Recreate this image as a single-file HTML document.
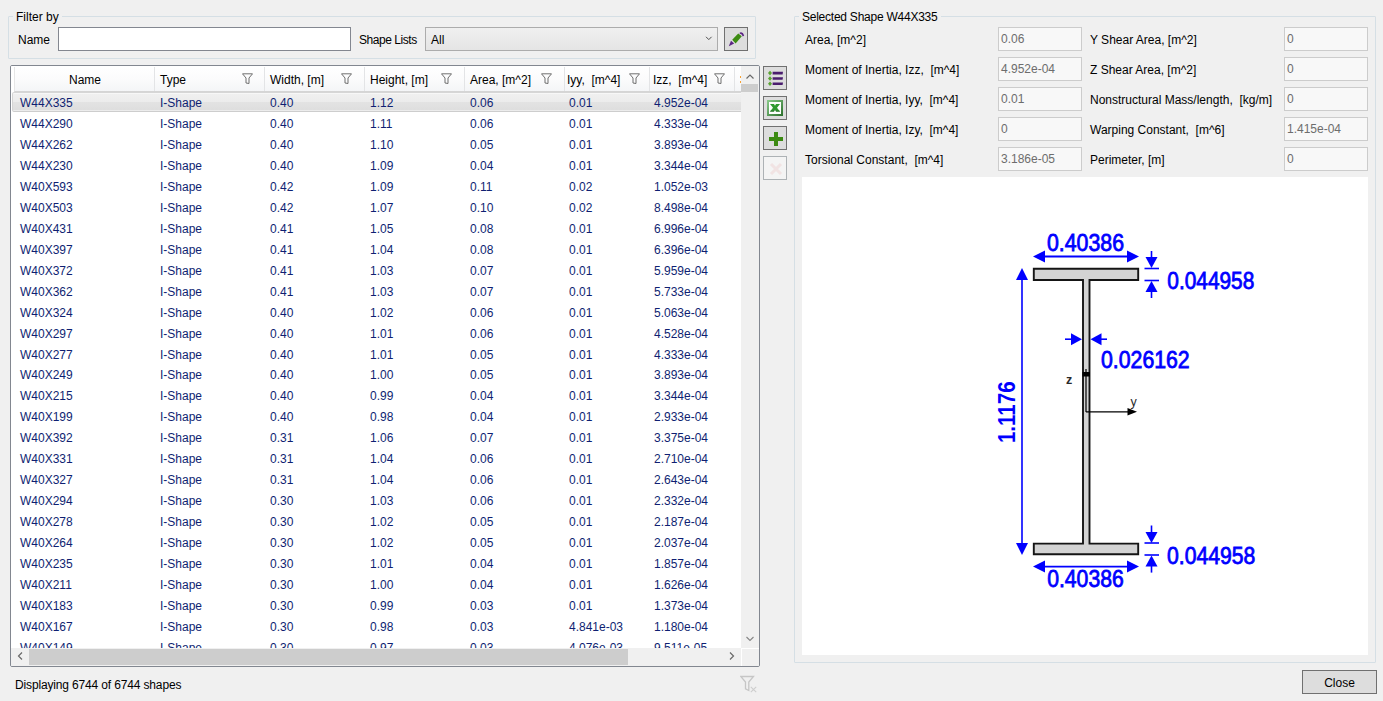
<!DOCTYPE html>
<html><head><meta charset="utf-8">
<style>
*{box-sizing:border-box;margin:0;padding:0}
html,body{width:1383px;height:701px;overflow:hidden;background:#f0f0f0;font-family:"Liberation Sans",sans-serif;font-size:12px;color:#000;position:relative}
.a{position:absolute;white-space:nowrap}
.t{position:absolute;white-space:nowrap;line-height:16px;height:16px}
.gb{position:absolute;border:1px solid #d5dfe5;border-radius:1px}
.legend{position:absolute;background:#f0f0f0;padding:0 3px;line-height:16px}
.tb{position:absolute;border:1px solid #abadb3;background:#fff}
.btn{position:absolute;border:1px solid #707070;background:#dddddd;width:24px;height:24px}
.grid{position:absolute;left:10px;top:65px;width:750px;height:602px;border:1px solid #828790;background:#fff;border-radius:2px;overflow:hidden}
.hdr{position:absolute;left:3px;top:1px;width:727px;height:25px;background:linear-gradient(#ffffff,#f7f8fa);border-bottom:1px solid #d5d5d5;border-left:1px solid #e3e3e3}
.hc{position:absolute;top:0;height:24px;border-right:1px solid #e3e3e3;line-height:24px}
.hc span{position:absolute;top:0}
.fun{position:absolute;top:6px}
.vp{position:absolute;left:0;top:0;width:730px;height:582px;overflow:hidden}
.row{position:absolute;left:0;width:730px;height:21px;line-height:21px;color:#0f1f72}
.row span{position:absolute;top:1px}
.sel{left:1px;width:733px;height:20px;line-height:19px;border:1px solid #d5d5d5;border-top-color:#d6d6d6;border-bottom-color:#cdcdcd;border-radius:2px;background:linear-gradient(#f7f7f7 0,#f7f7f7 1px,#f0f0f0 1px,#ececec 9px,#e3e3e3 9px,#dedede 17px,#ececec 17px,#ececec 18px)}
.sel span{margin-left:-2px;top:1px}
.lab{position:absolute;line-height:16px}
.ro{position:absolute;width:84px;height:24px;border:1px solid #cccccc;background:#f8f8f8;color:#6d6d6d;line-height:22px;padding-left:2px}
</style></head><body>
<!-- Filter group -->
<div class="gb" style="left:8px;top:16px;width:748px;height:43px"></div>
<div class="legend" style="left:13px;top:9px">Filter by</div>
<div class="t" style="left:18px;top:32px">Name</div>
<div class="tb" style="left:58px;top:27px;width:293px;height:24px;border-color:#838790"></div>
<div class="t" style="left:359px;top:32px;letter-spacing:-0.45px">Shape Lists</div>
<div class="a" style="left:425px;top:27px;width:293px;height:24px;border:1px solid #acacac;background:linear-gradient(#f0f0f0,#e5e5e5)"></div>
<div class="t" style="left:431px;top:32px">All</div>
<svg class="a" style="left:704px;top:35px" width="10" height="8" viewBox="0 0 10 8"><path d="M2 1.8 L4.8 4.6 L7.6 1.8" fill="none" stroke="#505050" stroke-width="1"/></svg>
<div class="btn" style="left:724px;top:27px">
<svg class="a" style="left:2px;top:2px" width="20" height="20" viewBox="0 0 20 20">
<path d="M1.8 16.2 L4 10.8 L7.2 13.6 Z" fill="#5b2483"/>
<path d="M5.2 9.8 L11.2 3.4 L14.8 6.2 L8.6 13.6 Z" fill="#3d8c12"/>
<path d="M12.8 2.6 Q15.8 1.4 17.2 5.4 L15.8 6.4 Q15.2 4.2 12.6 3.6 Z" fill="#5b2483"/>
</svg></div>
<div class="grid">
<div class="a" style="left:0;top:0;width:730px;height:26px;background:#fff"></div>
<div class="a" style="left:3px;top:1px;width:727px;height:25px;background:linear-gradient(#ffffff 0%,#fbfbfc 50%,#f4f5f7 100%);border-bottom:1px solid #d5d5d5;border-left:1px solid #e6e6e6"></div>
<div class="a" style="left:143px;top:1px;width:1px;height:24px;background:#e3e4e6"></div>
<div class="a" style="left:253px;top:1px;width:1px;height:24px;background:#e3e4e6"></div>
<div class="a" style="left:353px;top:1px;width:1px;height:24px;background:#e3e4e6"></div>
<div class="a" style="left:453px;top:1px;width:1px;height:24px;background:#e3e4e6"></div>
<div class="a" style="left:553px;top:1px;width:1px;height:24px;background:#e3e4e6"></div>
<div class="a" style="left:638px;top:1px;width:1px;height:24px;background:#e3e4e6"></div>
<div class="a" style="left:723px;top:1px;width:1px;height:24px;background:#e3e4e6"></div>
<div class="t" style="left:58px;top:6px">Name</div>
<div class="t" style="left:149px;top:6px">Type</div>
<div class="t" style="left:259px;top:6px">Width, [m]</div>
<div class="t" style="left:359px;top:6px">Height, [m]</div>
<div class="t" style="left:459px;top:6px">Area, [m^2]</div>
<div class="t" style="left:556px;top:6px">Iyy,&nbsp; [m^4]</div>
<div class="t" style="left:642px;top:6px">Izz,&nbsp; [m^4]</div>
<svg class="a" style="left:231px;top:7px" width="11" height="11" viewBox="0 0 11 11"><path d="M0.5 0.8 H10.5 L7 5 V10.5 L4 10 V5 Z" fill="none" stroke="#6f6f6f" stroke-width="1"/></svg>
<svg class="a" style="left:330px;top:7px" width="11" height="11" viewBox="0 0 11 11"><path d="M0.5 0.8 H10.5 L7 5 V10.5 L4 10 V5 Z" fill="none" stroke="#6f6f6f" stroke-width="1"/></svg>
<svg class="a" style="left:430px;top:7px" width="11" height="11" viewBox="0 0 11 11"><path d="M0.5 0.8 H10.5 L7 5 V10.5 L4 10 V5 Z" fill="none" stroke="#6f6f6f" stroke-width="1"/></svg>
<svg class="a" style="left:530px;top:7px" width="11" height="11" viewBox="0 0 11 11"><path d="M0.5 0.8 H10.5 L7 5 V10.5 L4 10 V5 Z" fill="none" stroke="#6f6f6f" stroke-width="1"/></svg>
<svg class="a" style="left:618px;top:7px" width="11" height="11" viewBox="0 0 11 11"><path d="M0.5 0.8 H10.5 L7 5 V10.5 L4 10 V5 Z" fill="none" stroke="#6f6f6f" stroke-width="1"/></svg>
<svg class="a" style="left:703px;top:7px" width="11" height="11" viewBox="0 0 11 11"><path d="M0.5 0.8 H10.5 L7 5 V10.5 L4 10 V5 Z" fill="none" stroke="#6f6f6f" stroke-width="1"/></svg>
<div class="a" style="left:728.5px;top:10px;width:1.5px;height:1.5px;background:#f7a030"></div><div class="a" style="left:728.5px;top:15px;width:1.5px;height:1.5px;background:#f7a030"></div>
<div class="vp" style="top:26px;height:556px"><div style="position:absolute;left:0;top:-26px">
<div class="row sel" style="top:26.00px"><span style="left:9px">W44X335</span><span style="left:149px">I-Shape</span><span style="left:259px">0.40</span><span style="left:359px">1.12</span><span style="left:459px">0.06</span><span style="left:558px">0.01</span><span style="left:643px">4.952e-04</span></div>
<div class="row" style="top:46.96px"><span style="left:9px">W44X290</span><span style="left:149px">I-Shape</span><span style="left:259px">0.40</span><span style="left:359px">1.11</span><span style="left:459px">0.06</span><span style="left:558px">0.01</span><span style="left:643px">4.333e-04</span></div>
<div class="row" style="top:67.92px"><span style="left:9px">W44X262</span><span style="left:149px">I-Shape</span><span style="left:259px">0.40</span><span style="left:359px">1.10</span><span style="left:459px">0.05</span><span style="left:558px">0.01</span><span style="left:643px">3.893e-04</span></div>
<div class="row" style="top:88.88px"><span style="left:9px">W44X230</span><span style="left:149px">I-Shape</span><span style="left:259px">0.40</span><span style="left:359px">1.09</span><span style="left:459px">0.04</span><span style="left:558px">0.01</span><span style="left:643px">3.344e-04</span></div>
<div class="row" style="top:109.84px"><span style="left:9px">W40X593</span><span style="left:149px">I-Shape</span><span style="left:259px">0.42</span><span style="left:359px">1.09</span><span style="left:459px">0.11</span><span style="left:558px">0.02</span><span style="left:643px">1.052e-03</span></div>
<div class="row" style="top:130.80px"><span style="left:9px">W40X503</span><span style="left:149px">I-Shape</span><span style="left:259px">0.42</span><span style="left:359px">1.07</span><span style="left:459px">0.10</span><span style="left:558px">0.02</span><span style="left:643px">8.498e-04</span></div>
<div class="row" style="top:151.76px"><span style="left:9px">W40X431</span><span style="left:149px">I-Shape</span><span style="left:259px">0.41</span><span style="left:359px">1.05</span><span style="left:459px">0.08</span><span style="left:558px">0.01</span><span style="left:643px">6.996e-04</span></div>
<div class="row" style="top:172.72px"><span style="left:9px">W40X397</span><span style="left:149px">I-Shape</span><span style="left:259px">0.41</span><span style="left:359px">1.04</span><span style="left:459px">0.08</span><span style="left:558px">0.01</span><span style="left:643px">6.396e-04</span></div>
<div class="row" style="top:193.68px"><span style="left:9px">W40X372</span><span style="left:149px">I-Shape</span><span style="left:259px">0.41</span><span style="left:359px">1.03</span><span style="left:459px">0.07</span><span style="left:558px">0.01</span><span style="left:643px">5.959e-04</span></div>
<div class="row" style="top:214.64px"><span style="left:9px">W40X362</span><span style="left:149px">I-Shape</span><span style="left:259px">0.41</span><span style="left:359px">1.03</span><span style="left:459px">0.07</span><span style="left:558px">0.01</span><span style="left:643px">5.733e-04</span></div>
<div class="row" style="top:235.60px"><span style="left:9px">W40X324</span><span style="left:149px">I-Shape</span><span style="left:259px">0.40</span><span style="left:359px">1.02</span><span style="left:459px">0.06</span><span style="left:558px">0.01</span><span style="left:643px">5.063e-04</span></div>
<div class="row" style="top:256.56px"><span style="left:9px">W40X297</span><span style="left:149px">I-Shape</span><span style="left:259px">0.40</span><span style="left:359px">1.01</span><span style="left:459px">0.06</span><span style="left:558px">0.01</span><span style="left:643px">4.528e-04</span></div>
<div class="row" style="top:277.52px"><span style="left:9px">W40X277</span><span style="left:149px">I-Shape</span><span style="left:259px">0.40</span><span style="left:359px">1.01</span><span style="left:459px">0.05</span><span style="left:558px">0.01</span><span style="left:643px">4.333e-04</span></div>
<div class="row" style="top:298.48px"><span style="left:9px">W40X249</span><span style="left:149px">I-Shape</span><span style="left:259px">0.40</span><span style="left:359px">1.00</span><span style="left:459px">0.05</span><span style="left:558px">0.01</span><span style="left:643px">3.893e-04</span></div>
<div class="row" style="top:319.44px"><span style="left:9px">W40X215</span><span style="left:149px">I-Shape</span><span style="left:259px">0.40</span><span style="left:359px">0.99</span><span style="left:459px">0.04</span><span style="left:558px">0.01</span><span style="left:643px">3.344e-04</span></div>
<div class="row" style="top:340.40px"><span style="left:9px">W40X199</span><span style="left:149px">I-Shape</span><span style="left:259px">0.40</span><span style="left:359px">0.98</span><span style="left:459px">0.04</span><span style="left:558px">0.01</span><span style="left:643px">2.933e-04</span></div>
<div class="row" style="top:361.36px"><span style="left:9px">W40X392</span><span style="left:149px">I-Shape</span><span style="left:259px">0.31</span><span style="left:359px">1.06</span><span style="left:459px">0.07</span><span style="left:558px">0.01</span><span style="left:643px">3.375e-04</span></div>
<div class="row" style="top:382.32px"><span style="left:9px">W40X331</span><span style="left:149px">I-Shape</span><span style="left:259px">0.31</span><span style="left:359px">1.04</span><span style="left:459px">0.06</span><span style="left:558px">0.01</span><span style="left:643px">2.710e-04</span></div>
<div class="row" style="top:403.28px"><span style="left:9px">W40X327</span><span style="left:149px">I-Shape</span><span style="left:259px">0.31</span><span style="left:359px">1.04</span><span style="left:459px">0.06</span><span style="left:558px">0.01</span><span style="left:643px">2.643e-04</span></div>
<div class="row" style="top:424.24px"><span style="left:9px">W40X294</span><span style="left:149px">I-Shape</span><span style="left:259px">0.30</span><span style="left:359px">1.03</span><span style="left:459px">0.06</span><span style="left:558px">0.01</span><span style="left:643px">2.332e-04</span></div>
<div class="row" style="top:445.20px"><span style="left:9px">W40X278</span><span style="left:149px">I-Shape</span><span style="left:259px">0.30</span><span style="left:359px">1.02</span><span style="left:459px">0.05</span><span style="left:558px">0.01</span><span style="left:643px">2.187e-04</span></div>
<div class="row" style="top:466.16px"><span style="left:9px">W40X264</span><span style="left:149px">I-Shape</span><span style="left:259px">0.30</span><span style="left:359px">1.02</span><span style="left:459px">0.05</span><span style="left:558px">0.01</span><span style="left:643px">2.037e-04</span></div>
<div class="row" style="top:487.12px"><span style="left:9px">W40X235</span><span style="left:149px">I-Shape</span><span style="left:259px">0.30</span><span style="left:359px">1.01</span><span style="left:459px">0.04</span><span style="left:558px">0.01</span><span style="left:643px">1.857e-04</span></div>
<div class="row" style="top:508.08px"><span style="left:9px">W40X211</span><span style="left:149px">I-Shape</span><span style="left:259px">0.30</span><span style="left:359px">1.00</span><span style="left:459px">0.04</span><span style="left:558px">0.01</span><span style="left:643px">1.626e-04</span></div>
<div class="row" style="top:529.04px"><span style="left:9px">W40X183</span><span style="left:149px">I-Shape</span><span style="left:259px">0.30</span><span style="left:359px">0.99</span><span style="left:459px">0.03</span><span style="left:558px">0.01</span><span style="left:643px">1.373e-04</span></div>
<div class="row" style="top:550.00px"><span style="left:9px">W40X167</span><span style="left:149px">I-Shape</span><span style="left:259px">0.30</span><span style="left:359px">0.98</span><span style="left:459px">0.03</span><span style="left:558px">4.841e-03</span><span style="left:643px">1.180e-04</span></div>
<div class="row" style="top:570.96px"><span style="left:9px">W40X149</span><span style="left:149px">I-Shape</span><span style="left:259px">0.30</span><span style="left:359px">0.97</span><span style="left:459px">0.03</span><span style="left:558px">4.076e-03</span><span style="left:643px">9.511e-05</span></div>
</div></div>
<div class="a" style="left:730px;top:0;width:18px;height:582px;background:#f0f0f0"></div>
<svg class="a" style="left:734px;top:6px" width="10" height="8" viewBox="0 0 10 8"><path d="M1.5 6.5 L5 3 L8.5 6.5" fill="none" stroke="#6a6a6a" stroke-width="1.2"/></svg>
<div class="a" style="left:730px;top:18px;width:17px;height:8px;background:#cdcdcd"></div>
<svg class="a" style="left:734px;top:569px" width="10" height="8" viewBox="0 0 10 8"><path d="M1.5 2 L5 5.5 L8.5 2" fill="none" stroke="#858585" stroke-width="1.1"/></svg>
<div class="a" style="left:0;top:582px;width:730px;height:18px;background:#f0f0f0"></div>
<svg class="a" style="left:5px;top:585px" width="8" height="10" viewBox="0 0 8 10"><path d="M6 1.5 L2.5 5 L6 8.5" fill="none" stroke="#6a6a6a" stroke-width="1.2"/></svg>
<div class="a" style="left:18px;top:583px;width:599px;height:16px;background:#cdcdcd"></div>
<svg class="a" style="left:717px;top:585px" width="8" height="10" viewBox="0 0 8 10"><path d="M2 1.5 L5.5 5 L2 8.5" fill="none" stroke="#6a6a6a" stroke-width="1.2"/></svg>
<div class="a" style="left:730px;top:582px;width:18px;height:18px;background:#f0f0f0;border-left:1px solid #fff;border-top:1px solid #fff"></div>
</div><!-- side buttons -->
<div class="btn" style="left:763px;top:66px">
<svg class="a" style="left:0;top:0" width="22" height="22" viewBox="0 0 22 22">
<g fill="#5aa332"><path d="M6 3.8 L8 6.1 L6 8.4 L4 6.1Z"/><path d="M6 9.2 L8 11.5 L6 13.8 L4 11.5Z"/><path d="M6 14.4 L8 16.7 L6 19 L4 16.7Z"/></g>
<g fill="#4a1d6e"><path d="M8.6 4.8 H19 L18.6 7.4 H8.6Z"/><path d="M8.6 10.2 H19 L18.6 12.8 H8.6Z"/><path d="M8.6 15.4 H19 L18.6 18 H8.6Z"/></g>
</svg></div>
<div class="btn" style="left:763px;top:96px">
<svg class="a" style="left:0;top:0" width="22" height="22" viewBox="0 0 22 22">
<defs><linearGradient id="xg" x1="0" y1="0" x2="1" y2="1"><stop offset="0" stop-color="#8ccc8c"/><stop offset="1" stop-color="#2a6e2a"/></linearGradient></defs>
<rect x="3" y="3" width="16" height="16" fill="url(#xg)"/>
<rect x="5" y="5" width="12" height="12" fill="#fdfffd"/>
<path d="M6 7 H10 L11 8.8 L12 7 H16 L13 10.8 L16 14.6 H12 L11 12.6 L10 14.6 H6 L9 10.8 Z" fill="#2f9a2f"/>
<path d="M6.5 13.8 H10 L11 12.2 L12 13.8 H15.6 L16 14.6 H12 L11 12.6 L10 14.6 H6 Z" fill="#1d5e1d"/>
</svg></div>
<div class="btn" style="left:763px;top:126px">
<svg class="a" style="left:2px;top:2px" width="20" height="20" viewBox="0 0 20 20">
<path d="M8 3 H12 V8 H17 V12 H12 V17 H8 V12 H3 V8 H8 Z" fill="#3c8a12"/>
</svg></div>
<div class="btn" style="left:763px;top:156px;background:#f4f4f4;border-color:#adb2b5">
<svg class="a" style="left:2px;top:2px" width="20" height="20" viewBox="0 0 20 20">
<path d="M5 5 L15 15 M15 5 L5 15" stroke="#f1e3e3" stroke-width="3"/>
</svg></div>
<!-- status -->
<div class="t" style="left:15px;top:677px;letter-spacing:-0.15px">Displaying 6744 of 6744 shapes</div>
<svg class="a" style="left:740px;top:675px" width="18" height="18" viewBox="0 0 18 18">
<path d="M0.8 1.5 H13.5 L8.8 7 V15.5 L5.5 13.8 V7 Z" fill="none" stroke="#c6c6c6" stroke-width="1.3"/>
<path d="M10.8 11.8 L16.2 17.2 M16.2 11.8 L10.8 17.2" stroke="#cdcdcd" stroke-width="1.1"/>
</svg>
<!-- right group -->
<div class="gb" style="left:794px;top:16px;width:582px;height:647px"></div>
<div class="legend" style="left:799px;top:9px;letter-spacing:-0.24px">Selected Shape W44X335</div>
<div class="lab" style="left:805px;top:32px">Area, [m^2]</div>
<div class="lab" style="left:805px;top:62px">Moment of Inertia, Izz,&nbsp; [m^4]</div>
<div class="lab" style="left:805px;top:92px">Moment of Inertia, Iyy,&nbsp; [m^4]</div>
<div class="lab" style="left:805px;top:122px">Moment of Inertia, Izy,&nbsp; [m^4]</div>
<div class="lab" style="left:805px;top:152px">Torsional Constant,&nbsp; [m^4]</div>
<div class="ro" style="left:998px;top:27px">0.06</div>
<div class="ro" style="left:998px;top:57px">4.952e-04</div>
<div class="ro" style="left:998px;top:87px">0.01</div>
<div class="ro" style="left:998px;top:117px">0</div>
<div class="ro" style="left:998px;top:147px">3.186e-05</div>
<div class="lab" style="left:1090px;top:32px">Y Shear Area, [m^2]</div>
<div class="lab" style="left:1090px;top:62px">Z Shear Area, [m^2]</div>
<div class="lab" style="left:1090px;top:92px">Nonstructural Mass/length,&nbsp; [kg/m]</div>
<div class="lab" style="left:1090px;top:122px">Warping Constant,&nbsp; [m^6]</div>
<div class="lab" style="left:1090px;top:152px">Perimeter, [m]</div>
<div class="ro" style="left:1284px;top:27px">0</div>
<div class="ro" style="left:1284px;top:57px">0</div>
<div class="ro" style="left:1284px;top:87px">0</div>
<div class="ro" style="left:1284px;top:117px">1.415e-04</div>
<div class="ro" style="left:1284px;top:147px">0</div>
<div class="a" style="left:802px;top:177px;width:566px;height:478px;background:#fff"></div>
<svg class="a" style="left:802px;top:177px" width="566" height="478" viewBox="802 177 566 478">
<path d="M1033.8 268.8 H1138.2 V280 H1089.5 V543.6 H1138.2 V554.3 H1033.8 V543.6 H1083 V280 H1033.8 Z" fill="#d3d3d3" stroke="#151515" stroke-width="1.9"/>
<g stroke="#0000ff" fill="#0000ff">
<!-- top width dim -->
<line x1="1040" y1="256.5" x2="1132" y2="256.5" stroke-width="1.8"/>
<path d="M1033 256.5 L1045 250.5 L1045 262.5 Z" stroke="none"/>
<path d="M1139 256.5 L1127 250.5 L1127 262.5 Z" stroke="none"/>
<!-- bottom width dim -->
<line x1="1040" y1="566.6" x2="1132" y2="566.6" stroke-width="1.8"/>
<path d="M1033 566.6 L1045 560.6 L1045 572.6 Z" stroke="none"/>
<path d="M1139 566.6 L1127 560.6 L1127 572.6 Z" stroke="none"/>
<!-- height dim -->
<line x1="1022" y1="275" x2="1022" y2="548" stroke-width="1.6"/>
<path d="M1022 268 L1016 280 L1028 280 Z" stroke="none"/>
<path d="M1022 555 L1016 543 L1028 543 Z" stroke="none"/>
<!-- top flange thickness -->
<line x1="1151.5" y1="251" x2="1151.5" y2="262" stroke-width="1.6"/>
<path d="M1151.5 268 L1145.5 257 L1157.5 257 Z" stroke="none"/>
<line x1="1144.5" y1="268.5" x2="1159" y2="268.5" stroke-width="1.6"/>
<line x1="1144.5" y1="280.5" x2="1159" y2="280.5" stroke-width="1.6"/>
<path d="M1151.5 281 L1145.5 292 L1157.5 292 Z" stroke="none"/>
<line x1="1151.5" y1="286" x2="1151.5" y2="298" stroke-width="1.6"/>
<!-- bottom flange thickness -->
<line x1="1151.5" y1="525.5" x2="1151.5" y2="537" stroke-width="1.6"/>
<path d="M1151.5 543 L1145.5 532 L1157.5 532 Z" stroke="none"/>
<line x1="1144.5" y1="543" x2="1159" y2="543" stroke-width="1.6"/>
<line x1="1144.5" y1="555" x2="1159" y2="555" stroke-width="1.6"/>
<path d="M1151.5 555.5 L1145.5 566.5 L1157.5 566.5 Z" stroke="none"/>
<line x1="1151.5" y1="561" x2="1151.5" y2="572.6" stroke-width="1.6"/>
<!-- web thickness -->
<line x1="1065" y1="339.2" x2="1075" y2="339.2" stroke-width="1.6"/>
<path d="M1082 339.2 L1071 333.2 L1071 345.2 Z" stroke="none"/>
<line x1="1097" y1="339.2" x2="1107" y2="339.2" stroke-width="1.6"/>
<path d="M1090.5 339.2 L1101.5 333.2 L1101.5 345.2 Z" stroke="none"/>
</g>
<g font-family="Liberation Sans" font-size="23.5" fill="#0000ff" stroke="#0000ff" stroke-width="0.8">
<text x="1047" y="251" textLength="77" lengthAdjust="spacingAndGlyphs">0.40386</text>
<text x="1047.2" y="587.3" textLength="76.5" lengthAdjust="spacingAndGlyphs">0.40386</text>
<text x="1167.3" y="289.4" textLength="87" lengthAdjust="spacingAndGlyphs">0.044958</text>
<text x="1167" y="564.2" textLength="88.3" lengthAdjust="spacingAndGlyphs">0.044958</text>
<text x="1101" y="367.9" textLength="88.7" lengthAdjust="spacingAndGlyphs">0.026162</text>
<text x="0" y="0" transform="translate(1014.6 443.1) rotate(-90)" textLength="61.7" lengthAdjust="spacingAndGlyphs" font-weight="bold" stroke="none">1.1176</text>
</g>
<!-- axes -->
<g stroke="#000" fill="#000">
<line x1="1086" y1="369" x2="1086" y2="412" stroke-width="1.2"/>
<rect x="1082.5" y="372" width="7.5" height="4.5" stroke="none"/>
<line x1="1086" y1="411.8" x2="1130" y2="411.8" stroke-width="1.2"/>
<path d="M1137 411.8 L1127.5 408 L1127.5 415.6 Z" stroke="none"/>
</g>
<g font-family="Liberation Sans" font-size="12.5" fill="#2a2a2a">
<text x="1066" y="384" font-weight="bold">z</text>
<text x="1130.5" y="405.5">y</text>
</g>
</svg>
<!-- close button -->
<div class="btn" style="left:1302px;top:670px;width:75px;height:24px"></div>
<div class="t" style="left:1302px;top:675px;width:75px;text-align:center">Close</div>
</body></html>
